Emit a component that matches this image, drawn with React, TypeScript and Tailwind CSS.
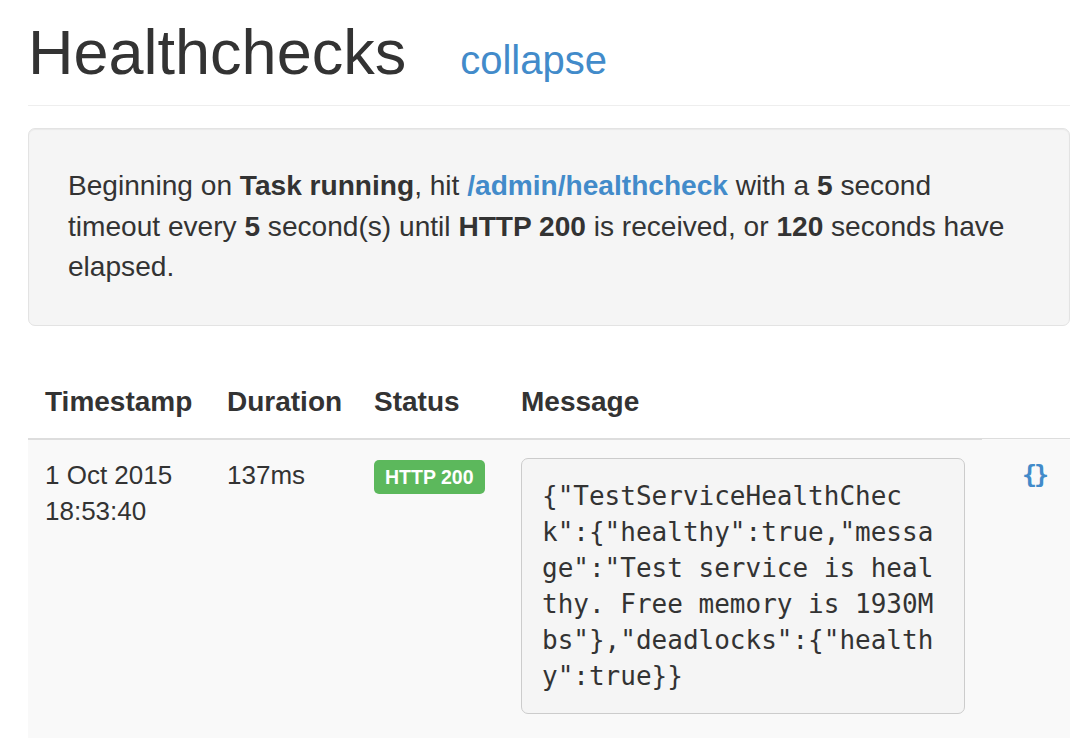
import React from "react";

const json = [
  '{"TestServiceHealthChec',
  'k":{"healthy":true,"messa',
  'ge":"Test service is heal',
  'thy. Free memory is 1930M',
  'bs"},"deadlocks":{"health',
  'y":true}}',
].join("\n");

export default function App() {
  return (
    <div
      className="min-h-[738px] bg-white pl-[28px] pr-[12px] text-[#333]"
      style={{ fontFamily: '"Liberation Sans", Arial, sans-serif' }}
    >
      <div className="border-b border-[#eee] pt-[18px] pb-[11px]">
        <h1 className="flex items-baseline text-[63px] leading-[68px] font-normal">
          <span>Healthchecks</span>
          <a className="ml-[54px] text-[40px] text-[#428bca]" href="#">
            collapse
          </a>
        </h1>
      </div>

      <div className="mt-[22px] rounded-[7px] border border-[#e3e3e3] bg-[#f5f5f5] px-[39px] pt-[37px] pb-[37px] text-[28.1px] leading-[40.5px] shadow-[inset_0_1px_1px_rgba(0,0,0,0.05)]">
        Beginning on <b>Task running</b>, hit{" "}
        <a className="font-bold text-[#428bca]" href="#">
          /admin/healthcheck
        </a>{" "}
        with a <b>5</b> second timeout every <b>5</b> second(s) until{" "}
        <b>HTTP 200</b> is received, or <b>120</b> seconds have elapsed.
      </div>

      <table className="mt-[37px] w-full table-fixed border-collapse">
        <thead>
          <tr>
            <th className="w-[182px] border-b-2 border-[#ddd] pl-[17px] pt-[19px] pb-[16px] text-left text-[28px] leading-[40px] font-bold">
              Timestamp
            </th>
            <th className="w-[147px] border-b-2 border-[#ddd] pl-[17px] pt-[19px] pb-[16px] text-left text-[28px] leading-[40px] font-bold">
              Duration
            </th>
            <th className="w-[147px] border-b-2 border-[#ddd] pl-[17px] pt-[19px] pb-[16px] text-left text-[28px] leading-[40px] font-bold">
              Status
            </th>
            <th className="w-[478px] border-b-2 border-[#ddd] pl-[17px] pt-[19px] pb-[16px] text-left text-[28px] leading-[40px] font-bold">
              Message
            </th>
            <th className="w-[88px]"></th>
          </tr>
        </thead>
        <tbody>
          <tr className="border-t border-[#ddd] bg-[#f9f9f9] align-top text-[26px] leading-[36px]">
            <td className="pl-[17px] pr-[8px] pt-[17px]">
              1 Oct 2015
              <br />
              18:53:40
            </td>
            <td className="pl-[17px] pt-[17px]">137ms</td>
            <td className="pl-[17px] pt-[17px]">
              <span className="mt-[3px] inline-block rounded-[5px] bg-[#5cb85c] px-[11px] text-[19.5px] leading-[34px] font-bold text-white align-top">
                HTTP 200
              </span>
            </td>
            <td className="pl-[17px] pr-[17px] pt-[17px] pb-[40px]">
              <pre
                className="mt-[1px] w-[444px] rounded-[7px] border border-[#ccc] bg-[#f5f5f5] px-[20px] py-[19px] text-[26px] leading-[36px] text-[#333] whitespace-pre"
                style={{ fontFamily: '"DejaVu Sans Mono", monospace' }}
              >
                {json}
              </pre>
            </td>
            <td className="pl-[40px] pt-[17px]">
              <a
                href="#"
                className="text-[25px] font-bold tracking-[-3px] text-[#428bca]"
                style={{ fontFamily: '"DejaVu Sans Mono", monospace' }}
              >
                {"{}"}
              </a>
            </td>
          </tr>
        </tbody>
      </table>
    </div>
  );
}
